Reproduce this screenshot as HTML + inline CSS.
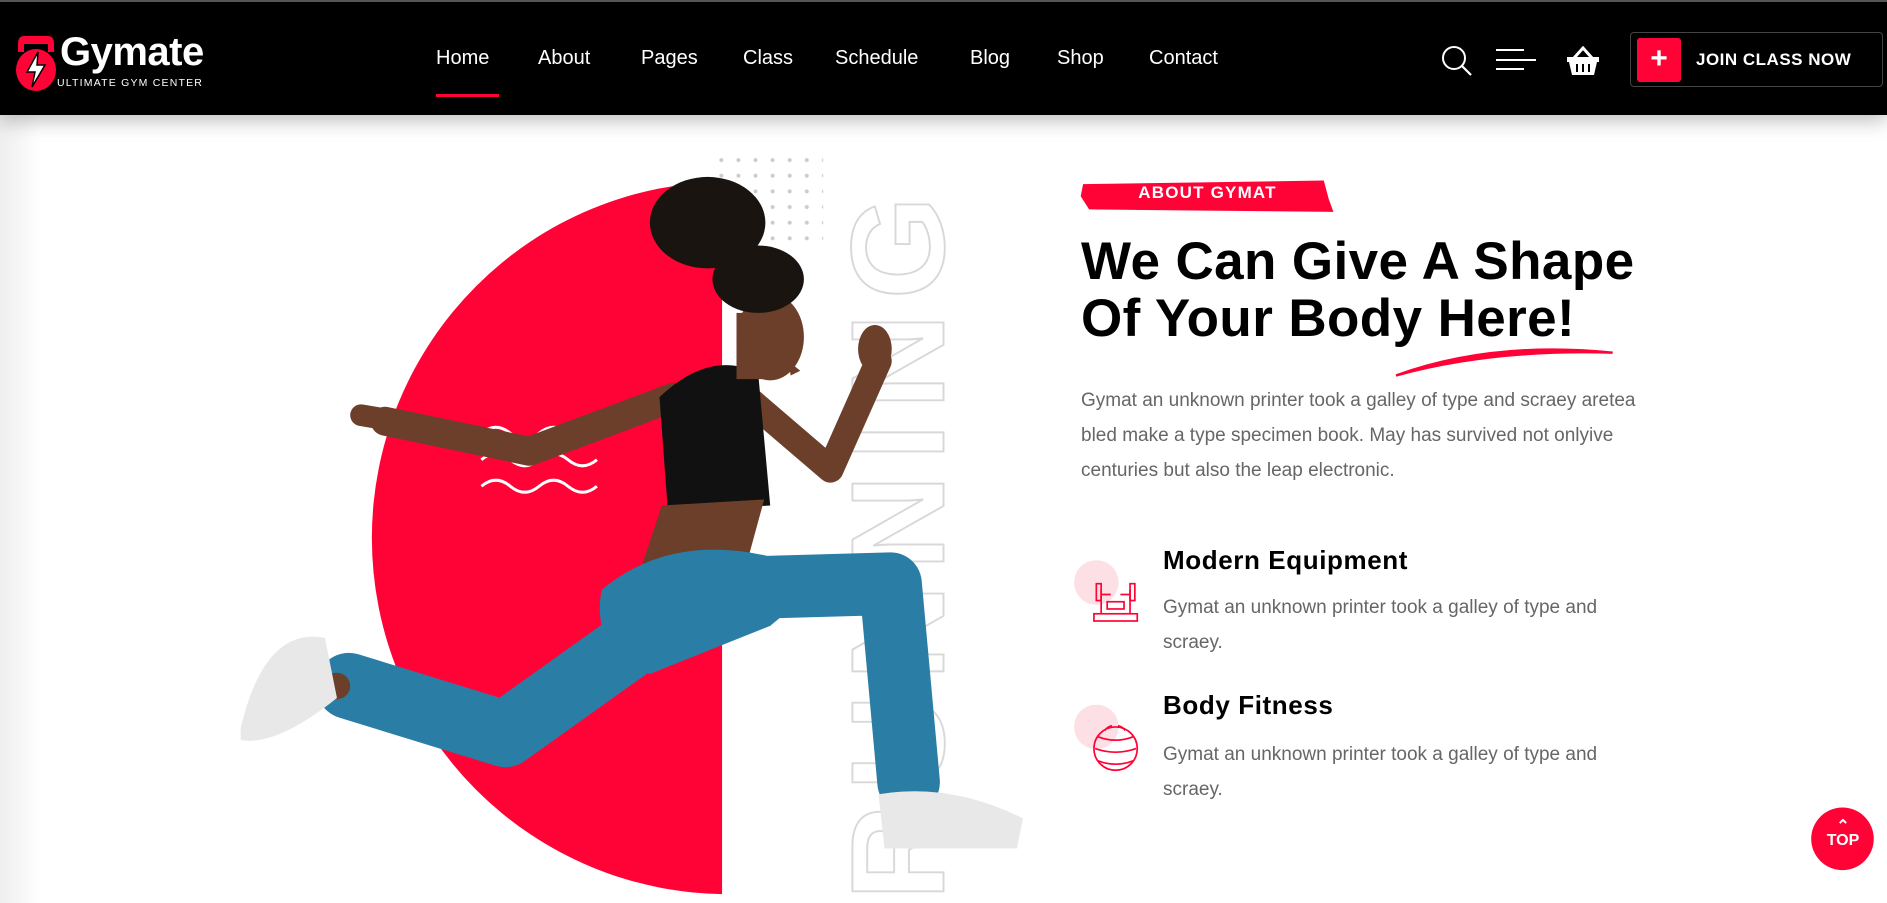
<!DOCTYPE html>
<html><head><meta charset="utf-8"><style>
*{margin:0;padding:0;box-sizing:border-box}
body{width:1887px;height:903px;overflow:hidden;background:#fff;font-family:"Liberation Sans",sans-serif;position:relative}
.hdr{position:absolute;left:0;top:0;width:1887px;height:115px;background:#000;border-top:2px solid #555;box-shadow:0 6px 18px rgba(0,0,0,.25);z-index:5}
.nav a{position:absolute;top:45px;color:#fff;font-size:20px;text-decoration:none}
.abs{position:absolute}
.h1{position:absolute;left:1081px;top:233px;font-size:53px;font-weight:bold;line-height:57px;color:#000;letter-spacing:0.4px}
.p{position:absolute;color:#666;font-size:19px;line-height:35px}
.ft{position:absolute;left:1163px;font-size:26px;font-weight:bold;color:#000;letter-spacing:.6px}
</style></head><body>
<div class="hdr">
  <svg class="abs" style="left:12px;top:30px" width="48" height="60" viewBox="0 0 48 60">
    <path d="M12 4 h24 q6 0 6 8 v8 h-6 v-8 h-24 v8 h-6 v-8 q0-8 6-8z" fill="#ff0336"/>
    <ellipse cx="24" cy="38" rx="20" ry="21" fill="#ff0336"/>
    <path d="M26 20 L15 40 h8 l-3 15 L33 33 h-8 z" fill="#fff" stroke="#000" stroke-width="1.5"/>
  </svg>
  <div class="abs" style="left:60px;top:28px;color:#fff;font-size:40px;font-weight:bold;letter-spacing:-0.5px">Gymate</div>
  <div class="abs" style="left:57px;top:75px;color:#fff;font-size:10.5px;letter-spacing:1.2px">ULTIMATE GYM CENTER</div>
  <div class="nav">
    <a style="left:436px">Home</a><a style="left:538px">About</a><a style="left:641px">Pages</a><a style="left:743px">Class</a><a style="left:835px">Schedule</a><a style="left:970px">Blog</a><a style="left:1057px">Shop</a><a style="left:1149px">Contact</a>
  </div>
  <div class="abs" style="left:436px;top:92px;width:63px;height:3px;background:#ff0336"></div>
  <svg class="abs" style="left:1440px;top:42px" width="36" height="34" viewBox="0 0 36 34"><circle cx="14" cy="14" r="11" fill="none" stroke="#fff" stroke-width="2"/><path d="M22 22 L31 31" stroke="#fff" stroke-width="2.2"/></svg>
  <div class="abs" style="left:1496px;top:47px;width:28px;height:2px;background:#fff"></div>
  <div class="abs" style="left:1496px;top:57px;width:40px;height:2px;background:#fff"></div>
  <div class="abs" style="left:1496px;top:66px;width:28px;height:2px;background:#fff"></div>
  <svg class="abs" style="left:1566px;top:44px" width="34" height="30" viewBox="0 0 34 30"><path d="M8 12 L17 2 L26 12" fill="none" stroke="#fff" stroke-width="3"/><path d="M1 11 h32 v5 h-2 l-3 13 h-22 l-3-13 h-2z" fill="#fff"/><path d="M11 18 v8 M17 18 v8 M23 18 v8" stroke="#000" stroke-width="2"/></svg>
  <div class="abs" style="left:1630px;top:30px;width:253px;height:55px;border:1px solid #444;border-radius:4px"></div>
  <div class="abs" style="left:1637px;top:36px;width:44px;height:44px;background:#ff0336;border-radius:3px;color:#fff;font-size:30px;font-weight:bold;text-align:center;line-height:42px">+</div>
  <div class="abs" style="left:1696px;top:48px;color:#fff;font-size:17px;font-weight:bold;letter-spacing:.5px">JOIN CLASS NOW</div>
</div>
<div class="abs" style="left:0;top:115px;width:40px;height:788px;background:linear-gradient(90deg,#eee,#fff)"></div>

<svg class="abs" style="left:0;top:0" width="1887" height="903" viewBox="0 0 1568 750.3">
  <defs><clipPath id="c"><rect x="0" y="0" width="600" height="750"/></clipPath>
  <pattern id="d" width="14.2" height="13" patternUnits="userSpaceOnUse"><circle cx="3" cy="3" r="1.7" fill="#ccc"/></pattern></defs>
  <rect x="592" y="124" width="92" height="84" fill="url(#d)"/>
  <circle cx="605" cy="447" r="296" fill="#ff0336" clip-path="url(#c)"/>
  <text transform="translate(784,748) rotate(-90)" font-family="Liberation Sans" font-weight="bold" font-size="110" fill="none" stroke="#d8d8d8" stroke-width="1.6" letter-spacing="10" textLength="595" lengthAdjust="spacing">RUNNING</text>
  <g fill="none" stroke="#fff" stroke-width="2.5">
    <path d="M400 360 q12-10 24 0 t24 0 t24 0 t24 0"/>
    <path d="M400 382 q12-10 24 0 t24 0 t24 0 t24 0"/>
    <path d="M400 404 q12-10 24 0 t24 0 t24 0 t24 0"/>
  </g>
  <g stroke-linecap="round" stroke-linejoin="round" fill="none">
    <path d="M560 330 L440 375 L320 350" stroke="#6b3f2a" stroke-width="24"/>
    <path d="M300 345 l30 5" stroke="#6b3f2a" stroke-width="18"/>
    <path d="M560 510 L420 610 L290 570" stroke="#2a7ea5" stroke-width="55"/>
    <path d="M250 575 L280 570" stroke="#6b3f2a" stroke-width="22"/>
    <path d="M560 490 L740 485 L755 650" stroke="#2a7ea5" stroke-width="52"/>
    <path d="M620 330 L690 390 L730 300" stroke="#6b3f2a" stroke-width="22"/>
  </g>
  <ellipse cx="727" cy="290" rx="14" ry="20" fill="#6b3f2a"/>
  <path d="M548 330 Q590 290 630 310 L640 420 L555 425 Z" fill="#111"/>
  <path d="M550 420 L635 415 L620 470 L530 480 Z" fill="#6b3f2a"/>
  <path d="M500 490 Q560 440 650 465 L700 470 L640 520 L540 560 Q490 540 500 490Z" fill="#2a7ea5"/>
  <rect x="612" y="260" width="30" height="55" fill="#6b3f2a"/>
  <ellipse cx="640" cy="280" rx="28" ry="36" fill="#6b3f2a"/>
  <path d="M655 300 l10 8 l-8 4z" fill="#6b3f2a"/>
  <ellipse cx="630" cy="232" rx="38" ry="28" fill="#1a1410"/>
  <ellipse cx="588" cy="185" rx="48" ry="38" fill="#1a1410"/>
  <path d="M200 605 Q220 520 270 530 L280 580 Q230 620 200 615Z" fill="#e8e8e8"/>
  <path d="M730 660 Q790 650 850 680 L845 705 L735 705Z" fill="#e8e8e8"/>
  <path d="M1160 312 Q1240 283 1340 293 Q1240 290 1160 312Z" fill="#ff0336" stroke="#ff0336" stroke-width="2"/>
  <path d="M900 153 L1100 150 L1104 165 L1108 176 L905 174 L898 163Z" fill="#ff0336"/>
  <circle cx="911" cy="484" r="18.5" fill="#fde0e5"/>
  <circle cx="911" cy="604" r="18.5" fill="#fde0e5"/>
  <g fill="none" stroke="#ff0336" stroke-width="1.4">
    <rect x="909" y="510" width="36" height="6"/><rect x="920" y="500" width="14" height="6"/>
    <path d="M915 490 v20 M939 490 v20 M915 494 h8 M931 494 h8"/>
    <rect x="911" y="485" width="4" height="14"/><rect x="939" y="485" width="4" height="14"/>
    <circle cx="927" cy="622" r="18"/>
    <path d="M912 612 q15 6 30 0 M910 622 q17 6 34 0 M912 632 q15 6 30 0 M918 607 q2-3 6-4 M935 607 q-2-3-6-4"/>
  </g>
  <circle cx="1531" cy="697" r="26" fill="#ff0336"/>
</svg>

<div class="abs" style="left:1081px;top:183px;width:253px;text-align:center;color:#fff;font-size:17px;font-weight:bold;letter-spacing:1.2px">ABOUT GYMAT</div>
<div class="h1">We Can Give A Shape<br>Of Your Body Here!</div>
<div class="p" style="left:1081px;top:383px;width:600px">Gymat an unknown printer took a galley of type and scraey aretea<br>bled make a type specimen book. May has survived not onlyive<br>centuries but also the leap electronic.</div>
<div class="ft" style="top:545px">Modern Equipment</div>
<div class="p" style="left:1163px;top:590px">Gymat an unknown printer took a galley of type and<br>scraey.</div>
<div class="ft" style="top:690px">Body Fitness</div>
<div class="p" style="left:1163px;top:737px">Gymat an unknown printer took a galley of type and<br>scraey.</div>
<div class="abs" style="left:1812px;top:820px;width:62px;text-align:center;color:#fff;font-weight:bold;font-size:16px;line-height:14px">&#8963;<br>TOP</div>
</body></html>
